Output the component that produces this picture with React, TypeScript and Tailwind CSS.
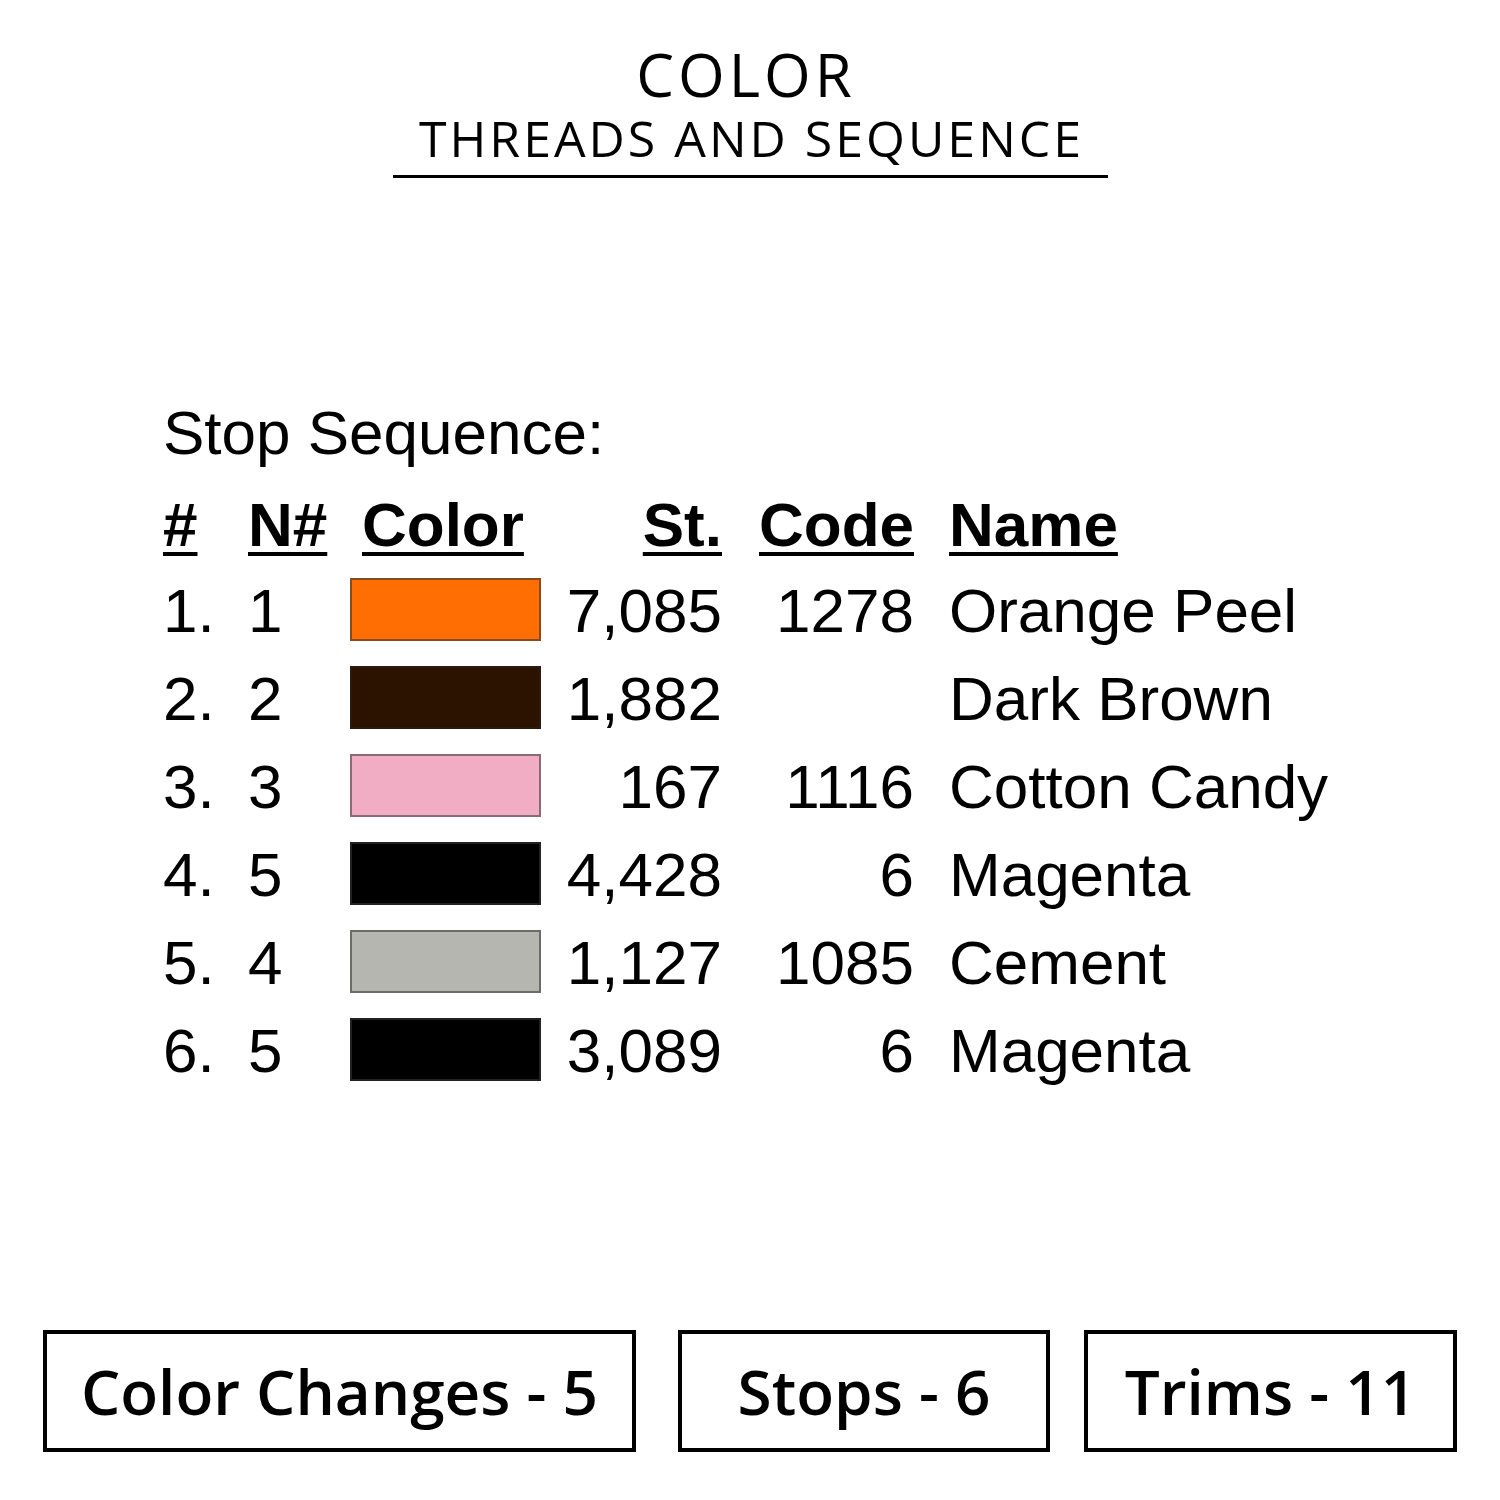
import React from 'react';

interface Stop {
  num: string;
  needle: string;
  fill: string;
  border: string;
  stitches: string;
  code: string;
  name: string;
}

const stops: Stop[] = [
  { num: '1.', needle: '1', fill: 'bg-[#ff6e02]', border: 'border-[#8a4a1c]', stitches: '7,085', code: '1278', name: 'Orange Peel' },
  { num: '2.', needle: '2', fill: 'bg-[#2b1300]', border: 'border-[#2a1a10]', stitches: '1,882', code: '', name: 'Dark Brown' },
  { num: '3.', needle: '3', fill: 'bg-[#f0adc4]', border: 'border-[#8c6a74]', stitches: '167', code: '1116', name: 'Cotton Candy' },
  { num: '4.', needle: '5', fill: 'bg-black', border: 'border-[#222]', stitches: '4,428', code: '6', name: 'Magenta' },
  { num: '5.', needle: '4', fill: 'bg-[#b6b6b1]', border: 'border-[#6b6b68]', stitches: '1,127', code: '1085', name: 'Cement' },
  { num: '6.', needle: '5', fill: 'bg-black', border: 'border-[#222]', stitches: '3,089', code: '6', name: 'Magenta' },
];

const head = 'font-bold underline decoration-[4px] underline-offset-[6px]';

export default function App() {
  return (
    <div className="w-[1500px] h-[1500px] bg-white text-black flex flex-col">
      {/* Title */}
      <div className="flex flex-col items-center pt-[44px] font-['Open_Sans',sans-serif]">
        <div className="text-[60px] leading-[60px] font-medium tracking-[4px] pl-[4px] -ml-[12px]">COLOR</div>
        <div className="mt-[9px] text-[50px] leading-[50px] font-normal tracking-[3px] pl-[3px]">THREADS AND SEQUENCE</div>
        <div className="mt-[12px] h-[3px] w-[715px] bg-black" />
      </div>

      {/* Stop sequence table */}
      <div className="mt-[224px] pl-[163px] font-['Liberation_Sans',Arial,sans-serif] text-[62px] leading-[62px]">
        <div>Stop Sequence:</div>
        <div className="mt-[18px] grid grid-cols-[85px_102px_200px_172px_192px_1fr] h-[85px] items-center">
          <span className={head + ' justify-self-start'}>#</span>
          <span className={head + ' justify-self-start'}>N#</span>
          <span className={head + ' justify-self-start ml-[12px]'}>Color</span>
          <span className={head + ' justify-self-end'}>St.</span>
          <span className={head + ' justify-self-end'}>Code</span>
          <span className={head + ' justify-self-start ml-[35px]'}>Name</span>
        </div>
        {stops.map((s, i) => (
          <div key={i} className="grid grid-cols-[85px_102px_200px_172px_192px_1fr] h-[88px] items-center">
            <span>{s.num}</span>
            <span>{s.needle}</span>
            <span className={`block w-[191px] h-[63px] -mt-[4px] border-2 ${s.fill} ${s.border}`} />
            <span className="justify-self-end">{s.stitches}</span>
            <span className="justify-self-end">{s.code}</span>
            <span className="ml-[35px] whitespace-nowrap">{s.name}</span>
          </div>
        ))}
      </div>

      {/* Summary boxes */}
      <div className="mt-auto mb-[48px] px-[43px] flex font-['Open_Sans',sans-serif] font-semibold text-[62px] leading-none">
        <div className="w-[593px] h-[122px] border-[4px] border-black flex items-center justify-center">Color Changes - 5</div>
        <div className="ml-[42px] w-[372px] h-[122px] border-[4px] border-black flex items-center justify-center">Stops - 6</div>
        <div className="ml-[34px] w-[373px] h-[122px] border-[4px] border-black flex items-center justify-center">Trims - 11</div>
      </div>
    </div>
  );
}
